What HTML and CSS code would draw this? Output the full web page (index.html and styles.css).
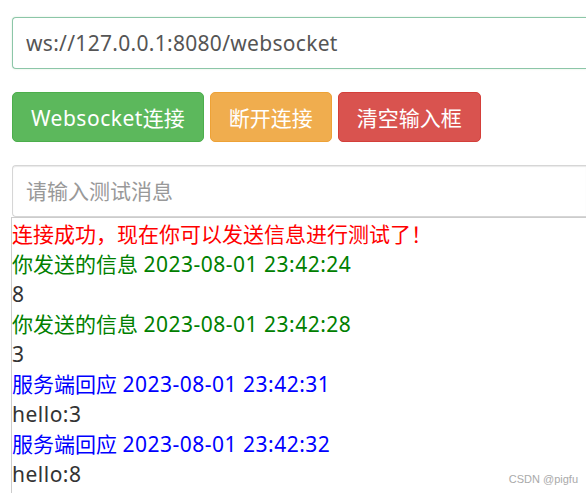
FILE: index.html
```html
<!DOCTYPE html>
<html lang="zh-CN">
<head>
<meta charset="utf-8">
<title>WebSocket</title>
<link rel="stylesheet" href="styles.css">
</head>
<body>
<div class="page">
  <input class="url-input" type="text" value="ws://127.0.0.1:8080/websocket">
  <div class="btn-row">
    <button class="btn btn-success"><span class="lat">Websocket</span>连接</button>
    <button class="btn btn-warning">断开连接</button>
    <button class="btn btn-danger">清空输入框</button>
  </div>
  <input class="msg-input" type="text" placeholder="请输入测试消息">
  <div class="log">
    <div class="line red">连接成功，现在你可以发送信息进行测试了！</div>
    <div class="line green">你发送的信息 <span class="lat">2023-08-01 23:42:24</span></div>
    <div class="line lat">8</div>
    <div class="line green">你发送的信息 <span class="lat">2023-08-01 23:42:28</span></div>
    <div class="line lat">3</div>
    <div class="line blue">服务端回应 <span class="lat">2023-08-01 23:42:31</span></div>
    <div class="line lat">hello:3</div>
    <div class="line blue">服务端回应 <span class="lat">2023-08-01 23:42:32</span></div>
    <div class="line lat">hello:8</div>
    <div class="watermark">CSDN @pigfu</div>
  </div>
</div>
</body>
</html>
```

FILE: styles.css
```css
html, body {
  margin: 0;
  padding: 0;
  background: #fff;
}
body {
  width: 586px;
  height: 493px;
  overflow: hidden;
  font-family: "Noto Sans", "Noto Sans CJK SC", sans-serif;
  font-size: 21px;
  color: #333;
}
.page {
  box-sizing: border-box;
  width: 586px;
  height: 493px;
  padding: 17px 0 0 11px;
  display: flex;
  flex-direction: column;
}
.lat {
  letter-spacing: 0.5px;
}
.url-input, .msg-input {
  display: block;
  box-sizing: border-box;
  margin-left: 1px;
  width: calc(100% - 1px);
  height: 52px;
  padding: 0 13px;
  border: 1px solid #ccc;
  border-right: none;
  border-radius: 4px 0 0 4px;
  font-family: inherit;
  font-size: 21px;
  color: #555;
  background: #fff;
  outline: none;
}
.url-input {
  letter-spacing: 0.3px;
  border-color: #8cc6a8;
  box-shadow: 0 0 2px rgba(92, 184, 92, 0.25);
}
.msg-input {
  box-shadow: inset 0 1px 1px rgba(0, 0, 0, 0.09);
  border-color: #d6d6d6;
}
.msg-input::placeholder {
  color: #999;
}
.btn-row {
  display: flex;
  gap: 6px;
  margin: 23px 0 23px 1px;
}
.btn {
  box-sizing: border-box;
  height: 50px;
  padding: 0 18px;
  border: 1px solid transparent;
  border-radius: 5px;
  font-family: inherit;
  font-size: 21px;
  color: #fff;
  cursor: pointer;
}
.btn-success { background: #5cb85c; border-color: #4cae4c; }
.btn-warning { background: #f0ad4e; border-color: #eea236; }
.btn-danger  { background: #d9534f; border-color: #d43f3a; }
.log {
  flex: 1;
  position: relative;
  border-top: 1px solid #ccc;
  border-left: 1px solid #ccc;
  padding-top: 1px;
  overflow: hidden;
}
.line {
  line-height: 30px;
  white-space: nowrap;
}
.red { color: #f00; }
.green { color: #008000; }
.blue { color: #00f; }
.watermark {
  position: absolute;
  right: 8px;
  bottom: 8px;
  font-family: "Liberation Sans", sans-serif;
  font-size: 11px;
  color: #aaa;
}
```
